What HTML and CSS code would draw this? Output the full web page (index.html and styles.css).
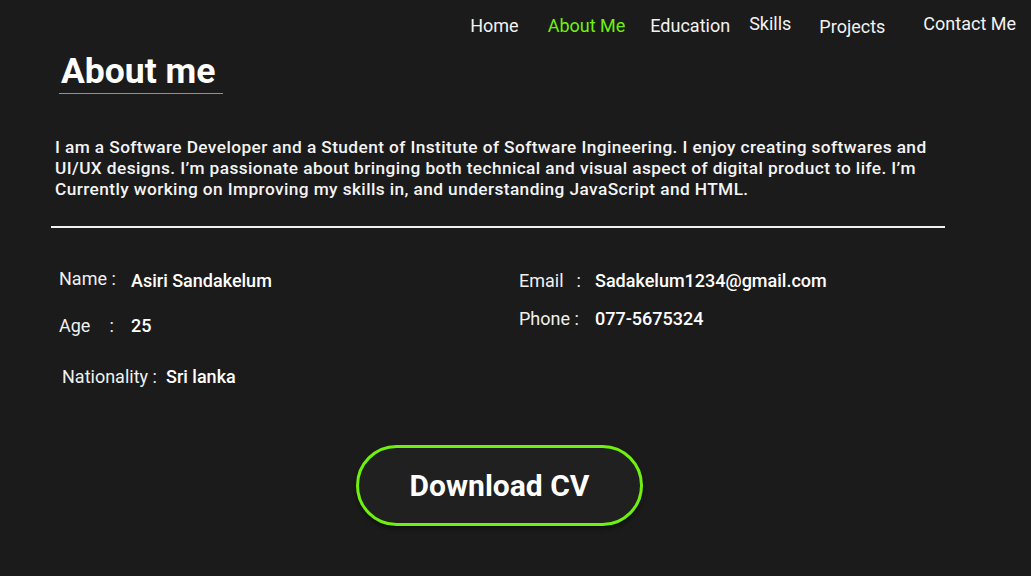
FILE: index.html
```html
<!DOCTYPE html>
<html lang="en">
<head>
<meta charset="utf-8">
<title>About Me</title>
<link rel="stylesheet" href="styles.css">
</head>
<body>
<nav class="nav">
  <a class="nav-link n-home">Home</a>
  <a class="nav-link n-about active">About Me</a>
  <a class="nav-link n-edu">Education</a>
  <a class="nav-link n-skills">Skills</a>
  <a class="nav-link n-proj">Projects</a>
  <a class="nav-link n-contact">Contact Me</a>
</nav>
<main class="about">
  <h1 class="title">About me</h1>
  <p class="intro">I am a Software Developer and a Student of Institute of Software Ingineering. I enjoy creating softwares and UI/UX designs. I’m passionate about bringing both technical and visual aspect of digital product to life. I’m Currently working on Improving my skills in, and understanding JavaScript and HTML.</p>
  <hr class="rule">
  <section class="info">
    <div class="col col-left">
      <div class="row r-name"><span class="label">Name :</span><span class="value">Asiri Sandakelum</span></div>
      <div class="row r-age"><span class="label lw-age">Age<span class="colon">:</span></span><span class="value">25</span></div>
      <div class="row r-nat"><span class="label">Nationality :</span><span class="value v-nat">Sri lanka</span></div>
    </div>
    <div class="col col-right">
      <div class="row r-email"><span class="label lw-right">Email<span class="colon c-email">:</span></span><span class="value">Sadakelum1234@gmail.com</span></div>
      <div class="row r-phone"><span class="label lw-right">Phone :</span><span class="value">077-5675324</span></div>
    </div>
  </section>
  <div class="actions">
    <a class="btn">Download CV</a>
  </div>
</main>
</body>
</html>
```
FILE: styles.css
```css
* { box-sizing: border-box; }
html, body { margin: 0; padding: 0; }
body {
  background: #1b1b1b;
  color: #ffffff;
  font-family: Roboto, "Liberation Sans", sans-serif;
  width: 1031px;
  height: 576px;
  overflow: hidden;
}
.nav {
  display: flex;
  justify-content: flex-end;
  align-items: flex-start;
  padding: 0 15px 0 0;
  height: 44px;
}
.nav-link {
  font-size: 18px;
  line-height: 20px;
  color: #f2f2f2;
  text-decoration: none;
}
.nav-link.active { color: #6ff00f; }
.n-home { margin-top: 16px; }
.n-about { margin-top: 16px; margin-left: 29px; }
.n-edu { margin-top: 16px; margin-left: 25px; }
.n-skills { margin-top: 14px; margin-left: 19px; }
.n-proj { margin-top: 17px; margin-left: 28px; }
.n-contact { margin-top: 14px; margin-left: 38px; }

.about { padding: 0 0 0 51px; }
.title {
  margin: 7px 0 0 8px;
  display: inline-block;
  font-size: 35.5px;
  font-weight: 700;
  line-height: 40px;
  padding: 0 7px 2px 2px;
  border-bottom: 1.5px solid #5cc21c;
}
.intro {
  margin: 43px 0 0 4px;
  width: 890px;
  font-size: 17.3px;
  font-weight: 500;
  line-height: 21px;
  letter-spacing: 0.4px;
  color: #f4f4f4;
}
.rule {
  margin: 26px 0 0 0;
  width: 894px;
  border: 0;
  height: 2px;
  background: #f0f0f0;
}
.info {
  display: flex;
  margin-top: 42px;
}
.col { display: flex; flex-direction: column; }
.col-left { width: 468px; padding-left: 8px; }
.row { display: flex; align-items: baseline; }
.label {
  font-size: 18px;
  font-weight: 400;
  color: #f0f0f0;
  line-height: 22px;
}
.value {
  font-size: 18px;
  font-weight: 500;
  color: #ffffff;
  line-height: 22px;
}
.r-name .label { width: 72px; position: relative; top: -2px; }
.r-age { margin-top: 23px; }
.lw-age { width: 72px; display: flex; }
.lw-age .colon { margin-left: 19px; }
.r-nat { margin-top: 29px; padding-left: 3px; }
.r-nat .label { width: 104px; }
.lw-right { width: 76px; display: flex; }
.c-email { margin-left: 13px; }
.r-phone { margin-top: 16px; }
.actions {
  display: flex;
  margin-top: 57px;
  padding-left: 305px;
}
.btn {
  display: flex;
  align-items: center;
  justify-content: center;
  width: 287px;
  height: 81px;
  border: 3px solid #6ff00f;
  border-radius: 41px;
  background: #202020;
  box-shadow: 0 3px 4px rgba(0,0,0,0.4);
  font-size: 30px;
  font-weight: 700;
  color: #ffffff;
  text-decoration: none;
}
```
